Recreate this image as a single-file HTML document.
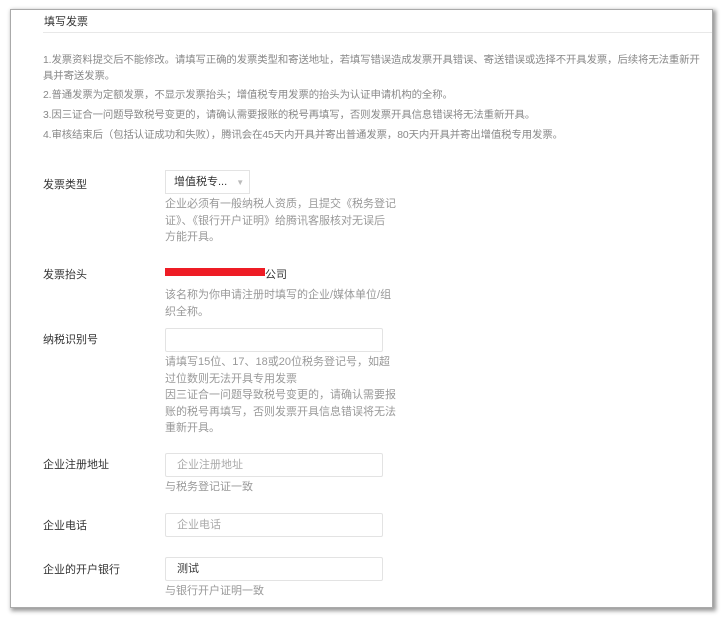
<!DOCTYPE html>
<html><head><meta charset="utf-8"><style>
*{margin:0;padding:0;box-sizing:border-box}
body{width:723px;height:618px;background:#fff;position:relative;overflow:hidden;font-family:"Liberation Sans","Noto Sans CJK SC",sans-serif;font-size:11px;color:#333}
.panel{position:absolute;left:11px;top:10px;width:701px;height:597px;background:#fff;box-shadow:0 0 0 1px #aaa,2px 2px 4px 2px #999}
.a{position:absolute;white-space:nowrap}
.n{color:#888;font-size:10.4px;letter-spacing:-0.1px}
.l{color:#333;font-size:11px}
.in{position:absolute;left:165px;width:218px;height:24px;border:1px solid #e3e3e3;border-radius:2px;background:#fff;font-size:11px;line-height:22px;padding-left:11px;color:#aaa}
.h{color:#999;font-size:11px;line-height:16.5px}
</style></head><body>
<div class="panel"></div>
<div class="a l" style="left:44px;top:13px">填写发票</div>
<div class="a" style="left:43px;top:32px;width:669px;height:1px;background:#e8e8e8"></div>
<div class="a n" style="left:43px;top:53px;line-height:16px">1.发票资料提交后不能修改。请填写正确的发票类型和寄送地址，若填写错误造成发票开具错误、寄送错误或选择不开具发票，后续将无法重新开<br>具并寄送发票。</div>
<div class="a n" style="left:43px;top:86px">2.普通发票为定额发票，不显示发票抬头；增值税专用发票的抬头为认证申请机构的全称。</div>
<div class="a n" style="left:43px;top:106px">3.因三证合一问题导致税号变更的，请确认需要报账的税号再填写，否则发票开具信息错误将无法重新开具。</div>
<div class="a n" style="left:43px;top:126px">4.审核结束后（包括认证成功和失败），腾讯会在45天内开具并寄出普通发票，80天内开具并寄出增值税专用发票。</div>

<div class="a l" style="left:43px;top:176px">发票类型</div>
<div class="a" style="left:165px;top:170px;width:85px;height:24px;border:1px solid #e3e3e3;line-height:22px;padding-left:8px;color:#333">增值税专... <span style="color:#bbb;font-size:8px;margin-left:6px">▼</span></div>
<div class="a h" style="left:165px;top:196px">企业必须有一般纳税人资质，且提交《税务登记<br>证》、《银行开户证明》给腾讯客服核对无误后<br>方能开具。</div>

<div class="a l" style="left:43px;top:266px">发票抬头</div>
<div class="a" style="left:165px;top:268px;width:100px;height:8px;background:#ee1c25"></div>
<div class="a l" style="left:265px;top:266px">公司</div>
<div class="a h" style="left:165px;top:287px">该名称为你申请注册时填写的企业/媒体单位/组<br>织全称。</div>

<div class="a l" style="left:43px;top:331px">纳税识别号</div>
<div class="in" style="top:328px"></div>
<div class="a h" style="left:165px;top:354px">请填写15位、17、18或20位税务登记号，如超<br>过位数则无法开具专用发票<br>因三证合一问题导致税号变更的，请确认需要报<br>账的税号再填写，否则发票开具信息错误将无法<br>重新开具。</div>

<div class="a l" style="left:43px;top:456px">企业注册地址</div>
<div class="in" style="top:453px">企业注册地址</div>
<div class="a h" style="left:165px;top:479px">与税务登记证一致</div>

<div class="a l" style="left:43px;top:517px">企业电话</div>
<div class="in" style="top:513px">企业电话</div>

<div class="a l" style="left:43px;top:561px">企业的开户银行</div>
<div class="in" style="top:557px;color:#333">测试</div>
<div class="a h" style="left:165px;top:583px">与银行开户证明一致</div>
</body></html>
